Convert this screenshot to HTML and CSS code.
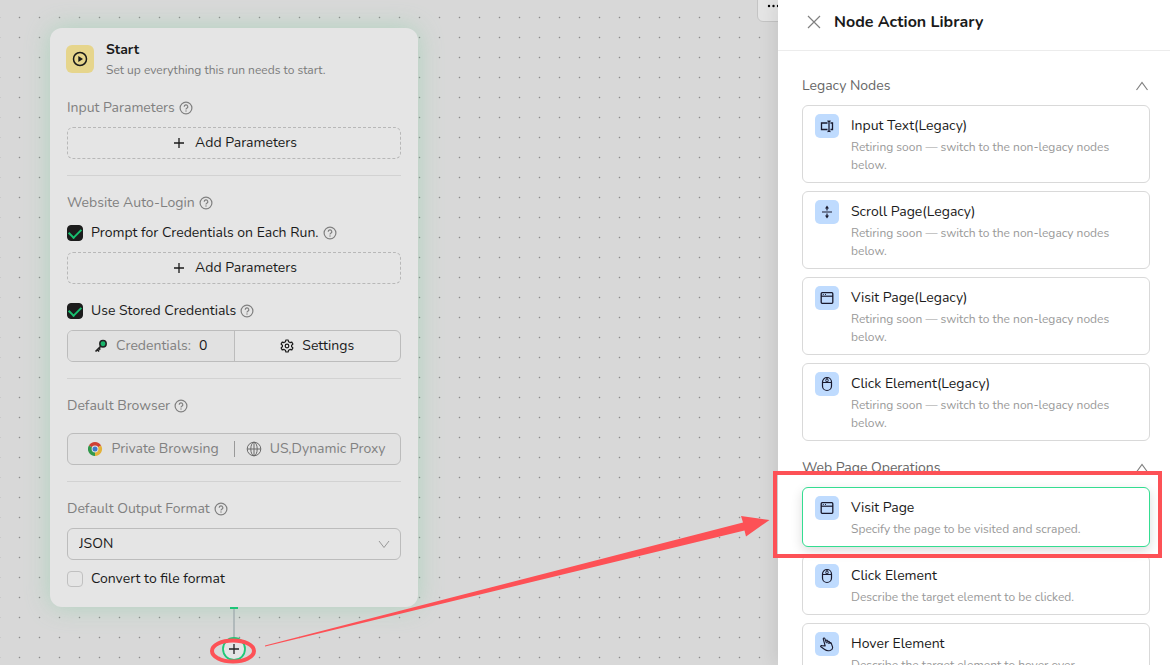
FILE: index.html
```html
<!DOCTYPE html>
<html lang="en">
<head>
<meta charset="utf-8">
<title>Node Action Library</title>
<link rel="stylesheet" href="styles.css">
</head>
<body>
<svg class="sprite" aria-hidden="true">
  <symbol id="help" viewBox="0 0 14 14"><circle cx="7" cy="7" r="5.900" fill="none" stroke="currentColor" stroke-width="1.200"/><path d="M5.200 5.700a1.800 1.800 0 1 1 2.600 1.600c-.6.3-.8.6-.8 1.100" fill="none" stroke="currentColor" stroke-width="1.200"/><circle cx="7" cy="10" r=".7" fill="currentColor"/></symbol>
  <symbol id="plus" viewBox="0 0 12 12"><path d="M6 1v10M1 6h10" stroke="currentColor" stroke-width="1.300" fill="none"/></symbol>
  <symbol id="up" viewBox="0 0 14 14"><path d="M1.500 11 7 3.500l5.500 7.500" stroke="currentColor" stroke-width="1.200" fill="none"/></symbol>
  <symbol id="input" viewBox="0 0 16 16"><path d="M8.500 5H2.500v6.500h6M11.500 5h2v6.500h-2M8.500 3c1 0 1.500.4 1.500 1v8.500c0 .6-.5 1-1.500 1M11.500 3c-1 0-1.500.4-1.500 1M11.500 13.500c-1 0-1.500-.4-1.500-1" stroke="currentColor" stroke-width="1.300" fill="none"/></symbol>
  <symbol id="scroll" viewBox="0 0 16 16"><path d="M3 8h10M8 3v3.500M8 9.500V13" stroke="currentColor" stroke-width="1.200" fill="none"/><path d="M8 1.500 10 4.500H6zM8 14.500l2-3H6z" fill="currentColor"/></symbol>
  <symbol id="page" viewBox="0 0 16 16"><rect x="2.200" y="2.700" width="11.600" height="10.600" rx="1" stroke="currentColor" stroke-width="1.300" fill="none"/><path d="M2 6.200h12" stroke="currentColor" stroke-width="1.200"/><path d="M3.800 4.500h1M6 4.500h1" stroke="currentColor" stroke-width=".9"/></symbol>
  <symbol id="mouse" viewBox="0 0 16 16"><rect x="3.500" y="1.500" width="9" height="13" rx="4.500" stroke="currentColor" stroke-width="1.200" fill="none"/><path d="M3.500 6.500h9M8 1.500v1.500M8 5.500v1" stroke="currentColor" stroke-width="1.100"/><rect x="6.800" y="3" width="2.400" height="3" rx="1.200" fill="none" stroke="currentColor"/></symbol>
  <symbol id="hand" viewBox="0 0 16 16"><path d="M6.200 10 4.300 3.100c-.3-1.100 1.200-1.600 1.600-.5l1.500 4.200-.5-1.700c-.2-1 1.200-1.300 1.500-.4l.5 1.500c-.1-.9 1.200-1.200 1.500-.2l.4 1.300c0-.8 1.200-.9 1.500 0l1.200 3.500c.5 1.900-.4 3-2.500 3.700-2.300.7-4 .1-5.300-1L1.900 10.800c-.7-.8.100-1.600 1-1.200z" stroke="currentColor" stroke-width="1.100" fill="none" stroke-linejoin="round"/><path d="M8.900 6.200l.5 1.700M10.900 6.500l.4 1.300" stroke="currentColor"/></symbol>
</svg>

<main class="canvas">
  <button class="toolbar-more" type="button" aria-label="More"><svg width="16" height="4" viewBox="0 0 16 4"><circle cx="2" cy="2" r="1.200"/><circle cx="6.500" cy="2" r="1.200"/><circle cx="11" cy="2" r="1.200"/></svg></button>

  <section class="node">
    <header class="node-head">
      <span class="node-icon"><svg width="16" height="16" viewBox="0 0 16 16"><circle cx="8" cy="8" r="6.500" fill="none" stroke="currentColor" stroke-width="1.500"/><path d="M6.300 5v6L11 8z" fill="currentColor"/></svg></span>
      <div>
        <h1 class="node-title">Start</h1>
        <p class="node-desc">Set up everything this run needs to start.</p>
      </div>
    </header>

    <div class="group">
      <h2 class="label">Input Parameters <svg class="help"><use href="#help"/></svg></h2>
      <button class="add" type="button"><svg class="plus"><use href="#plus"/></svg>Add Parameters</button>
    </div>

    <div class="group">
      <h2 class="label">Website Auto-Login <svg class="help"><use href="#help"/></svg></h2>
      <div class="check"><input type="checkbox" id="prompt" checked><label for="prompt">Prompt for Credentials on Each Run.</label><svg class="help"><use href="#help"/></svg></div>
      <button class="add" type="button"><svg class="plus"><use href="#plus"/></svg>Add Parameters</button>
      <div class="check check-second"><input type="checkbox" id="stored" checked><label for="stored">Use Stored Credentials</label><svg class="help"><use href="#help"/></svg></div>
      <div class="split">
        <div class="split-cell shaded">
          <svg width="14" height="14" viewBox="0 0 14 14"><path d="M6.500 7.500 1.500 12.500M3.300 10.700l1.800 1.800M4.800 9.200l1.500 1.500" stroke="#222" stroke-width="1.700" fill="none"/><circle cx="9" cy="4.800" r="3.200" fill="#18b56b" stroke="#222" stroke-width="1.500"/></svg>
          <span class="muted">Credentials:</span><span>0</span>
        </div>
        <button class="split-cell" type="button">
          <svg width="14" height="14" viewBox="0 0 14 14" fill="none" stroke="currentColor" stroke-width="1.200" stroke-linejoin="round"><path d="M5.900 1h2.200l.5 1.800 1.400.8 1.800-.5 1.100 1.900L11.600 6.300v1.400l1.300 1.300-1.100 1.900-1.800-.5-1.400.8-.5 1.800H5.900l-.5-1.800-1.400-.8-1.800.5L1.100 9l1.300-1.300V6.300L1.100 5l1.100-1.900 1.800.5 1.400-.8z"/><circle cx="7" cy="7" r="1.800"/></svg>
          Settings
        </button>
      </div>
    </div>

    <div class="group">
      <h2 class="label">Default Browser <svg class="help"><use href="#help"/></svg></h2>
      <div class="browser muted">
        <span class="browser-part">
          <svg width="16" height="16" viewBox="0 0 16 16"><path d="M8 8 1.900 4.500A7 7 0 0 1 14.100 4.500z" fill="#cf4034"/><path d="M8 8 14.100 4.500A7 7 0 0 1 8 15z" fill="#e3b23a"/><path d="M8 8V15A7 7 0 0 1 1.900 4.500z" fill="#31984b"/><circle cx="8" cy="8" r="3.400" fill="#e5e5e5"/><circle cx="8" cy="8" r="2.500" fill="#3f78cc"/></svg>
          Private Browsing
        </span>
        <span class="bar"></span>
        <span class="browser-part">
          <svg width="16" height="16" viewBox="0 0 16 16" fill="none" stroke="#6b6b6b"><circle cx="8" cy="8" r="6.800"/><ellipse cx="8" cy="8" rx="3.200" ry="6.800"/><path d="M1.200 8h13.600M8 1.200v13.600"/></svg>
          US,Dynamic Proxy
        </span>
      </div>
    </div>

    <div class="group">
      <label class="label" for="format">Default Output Format <svg class="help"><use href="#help"/></svg></label>
      <div class="select-wrap">
        <select id="format"><option>JSON</option></select>
        <svg class="chevron" width="12" height="12" viewBox="0 0 12 12"><path d="M1 3l5 6.500L11 3" fill="none" stroke="#999"/></svg>
      </div>
      <div class="check"><input type="checkbox" id="convert"><label for="convert">Convert to file format</label></div>
    </div>
  </section>

  <svg class="edge" width="600" height="665" viewBox="0 0 600 665" aria-hidden="true">
    <path d="M234 608v30" stroke="#a5afb2" stroke-width="1.500"/>
    <rect x="230" y="607" width="8" height="2" fill="#1ec578"/>
    <circle cx="234" cy="649" r="11" fill="#e5e5e5" stroke="#1fc877" stroke-width="1.800"/>
    <path d="M234 644v10M229 649h10" stroke="#222" stroke-width="1.300"/>
  </svg>
  <svg class="edge" width="778" height="665" viewBox="0 0 778 665" aria-hidden="true">
    <ellipse cx="233" cy="651" rx="21" ry="10.500" fill="none" stroke="#fd5156" stroke-width="4"/>
    <path d="M265 645.500 743 522.500 741 516 769.500 520 746 536.500 744.500 530.500 265 646.500z" fill="#fd5156"/>
  </svg>
</main>

<aside class="drawer">
  <header class="drawer-head">
    <button class="close" type="button" aria-label="Close"><svg width="14" height="14" viewBox="0 0 14 14"><path d="M1 1l12 12M13 1 1 13" stroke="currentColor" stroke-width="1.200"/></svg></button>
    <h2 class="drawer-title">Node Action Library</h2>
  </header>
  <div class="drawer-body">
    <section class="category">
      <button class="category-head" type="button" aria-expanded="true">Legacy Nodes<svg class="up"><use href="#up"/></svg></button>
      <button class="action" type="button"><span class="action-icon"><svg><use href="#input"/></svg></span><span class="action-text"><span class="action-name">Input Text(Legacy)</span><span class="action-desc">Retiring soon — switch to the non-legacy nodes below.</span></span></button>
      <button class="action" type="button"><span class="action-icon"><svg><use href="#scroll"/></svg></span><span class="action-text"><span class="action-name">Scroll Page(Legacy)</span><span class="action-desc">Retiring soon — switch to the non-legacy nodes below.</span></span></button>
      <button class="action" type="button"><span class="action-icon"><svg><use href="#page"/></svg></span><span class="action-text"><span class="action-name">Visit Page(Legacy)</span><span class="action-desc">Retiring soon — switch to the non-legacy nodes below.</span></span></button>
      <button class="action" type="button"><span class="action-icon"><svg><use href="#mouse"/></svg></span><span class="action-text"><span class="action-name">Click Element(Legacy)</span><span class="action-desc">Retiring soon — switch to the non-legacy nodes below.</span></span></button>
    </section>
    <section class="category">
      <button class="category-head" type="button" aria-expanded="true">Web Page Operations<svg class="up"><use href="#up"/></svg></button>
      <button class="action active" type="button"><span class="action-icon"><svg><use href="#page"/></svg></span><span class="action-text"><span class="action-name">Visit Page</span><span class="action-desc">Specify the page to be visited and scraped.</span></span></button>
      <button class="action" type="button"><span class="action-icon"><svg><use href="#mouse"/></svg></span><span class="action-text"><span class="action-name">Click Element</span><span class="action-desc">Describe the target element to be clicked.</span></span></button>
      <button class="action" type="button"><span class="action-icon"><svg><use href="#hand"/></svg></span><span class="action-text"><span class="action-name">Hover Element</span><span class="action-desc">Describe the target element to hover over.</span></span></button>
    </section>
  </div>
</aside>
</body>
</html>
```

FILE: styles.css
```css
* { box-sizing: border-box; }
body {
  margin: 0;
  height: 100vh;
  display: flex;
  overflow: hidden;
  font-family: Nunito, Lato, "Noto Sans", sans-serif;
  font-size: 14px;
  line-height: 22px;
  color: #1a1a1a;
}
h1, h2, p { margin: 0; font-size: inherit; font-weight: inherit; }
button, select { font: inherit; color: inherit; background: none; margin: 0; }
svg { flex: none; }
.sprite { position: absolute; width: 0; height: 0; }

.canvas {
  flex: 1;
  position: relative;
  background-color: #d8d8d8;
  background-image: radial-gradient(circle at 10.5px 10.5px, #8c8c8c 0.2px, transparent 1.2px);
  background-size: 20px 20px;
  background-position: 9px 7px;
}
.toolbar-more {
  position: absolute;
  top: -11px;
  right: -19px;
  width: 40px;
  height: 33px;
  padding: 0 9px;
  display: flex;
  align-items: center;
  border: 1px solid #c4c4c4;
  border-radius: 6px;
  background: #e5e5e5;
}

.node {
  position: absolute;
  top: 28px;
  left: 50px;
  width: 368px;
  padding: 11px 17px 17px;
  border-radius: 12px;
  background: #e5e5e5;
  box-shadow: 0 0 24px rgba(120, 205, 155, 0.42);
}
.node-head { display: flex; gap: 12px; align-items: flex-start; padding-bottom: 17px; }
.node-icon {
  width: 28px;
  height: 28px;
  margin: 6px 0 0 -1px;
  display: grid;
  place-items: center;
  border-radius: 6px;
  background: #e6d58c;
}
.node-title { font-weight: 700; }
.node-desc { font-size: 12px; line-height: 19px; color: #7b7b7b; }
.group + .group { margin-top: 16px; padding-top: 16px; border-top: 1px solid #d2d2d2; }
.label { display: flex; align-items: center; gap: 4px; color: #808080; }
.muted { color: #808080; }
.help { width: 14px; height: 14px; color: #808080; }
.add {
  width: 100%;
  height: 32px;
  margin-top: 8px;
  padding: 0 6px 0 8px;
  display: flex;
  align-items: center;
  justify-content: center;
  gap: 10px;
  border: 1px dashed #b8b8b8;
  border-radius: 6px;
}
.plus { width: 12px; height: 12px; }
.check { display: flex; align-items: center; gap: 4px; margin-top: 8px; }
.check-second { margin-top: 16px; }
.check input {
  appearance: none;
  width: 16px;
  height: 16px;
  margin: 0 4px 0 0;
  display: grid;
  place-items: center;
  border: 1px solid #c0c0c0;
  border-radius: 4px;
}
.check input:checked { background: #1c1c1c; border-color: #1c1c1c; }
.check input:checked::after {
  content: "";
  width: 10px;
  height: 6px;
  margin-bottom: 3px;
  border: solid #18c070;
  border-width: 0 0 2px 2px;
  transform: rotate(-45deg);
}
.split, .browser {
  height: 32px;
  display: flex;
  border: 1px solid #bcbcbc;
  border-radius: 6px;
  overflow: hidden;
}
.split { margin-top: 8px; }
.split-cell {
  flex: 1 1 0;
  display: flex;
  align-items: center;
  justify-content: center;
  gap: 8px;
  padding: 0;
  border: 0;
}
.shaded { background: #e1e1e1; border-right: 1px solid #bcbcbc; }
.browser {
  margin-top: 16px;
  padding-left: 5px;
  align-items: center;
  justify-content: center;
  gap: 11px;
  background: #e2e2e2;
}
.browser-part { display: flex; align-items: center; gap: 8px; }
.bar { width: 1px; height: 16px; margin-left: 4px; background: #999; }
.select-wrap { position: relative; margin-top: 8px; }
select {
  display: block;
  width: 100%;
  height: 32px;
  padding: 0 11px;
  appearance: none;
  border: 1px solid #bcbcbc;
  border-radius: 6px;
}
.chevron { position: absolute; right: 11px; top: 10px; pointer-events: none; }
.edge { position: absolute; top: 0; left: 0; pointer-events: none; }

.drawer {
  position: relative;
  flex: 0 0 392px;
  background: #fff;
  box-shadow: -4px 0 16px rgba(0, 0, 0, 0.08);
}
.drawer-head {
  height: 51px;
  padding: 0 28px 7px;
  display: flex;
  align-items: center;
  gap: 12px;
  border-bottom: 1px solid #ececec;
}
.close { display: flex; padding: 1px; border: 0; color: #808080; }
.drawer-title { font-size: 16px; font-weight: 700; }
.drawer-body { padding: 23px 20px 0 24px; }
.category { display: flex; flex-direction: column; gap: 8px; }
.category + .category { margin-top: 15px; }
.category-head {
  display: flex;
  align-items: center;
  justify-content: space-between;
  padding: 1px 1px 0 0;
  border: 0;
  color: #666;
}
.up { width: 14px; height: 14px; color: #808080; }
.action {
  position: relative;
  display: flex;
  align-items: flex-start;
  gap: 12px;
  padding: 8px 12px;
  border: 1px solid #d9d9d9;
  border-radius: 6px;
  background: #fff;
  text-align: left;
}
.action-icon {
  flex: none;
  width: 24px;
  height: 24px;
  display: grid;
  place-items: center;
  border-radius: 5px;
  background: #bfdbfe;
  color: #1a1a2e;
}
.action-icon svg { width: 16px; height: 16px; }
.action-text { display: flex; flex-direction: column; gap: 1px; padding-top: 1px; }
.action-desc { font-size: 12px; line-height: 18px; color: #999; }
.active { z-index: 1; border-color: #34dd91; box-shadow: 0 4px 12px rgba(0, 0, 0, 0.14); }
.active::after {
  content: "";
  position: absolute;
  inset: -17px -13px -12px -30px;
  border: 4px solid #fd5156;
}
```
